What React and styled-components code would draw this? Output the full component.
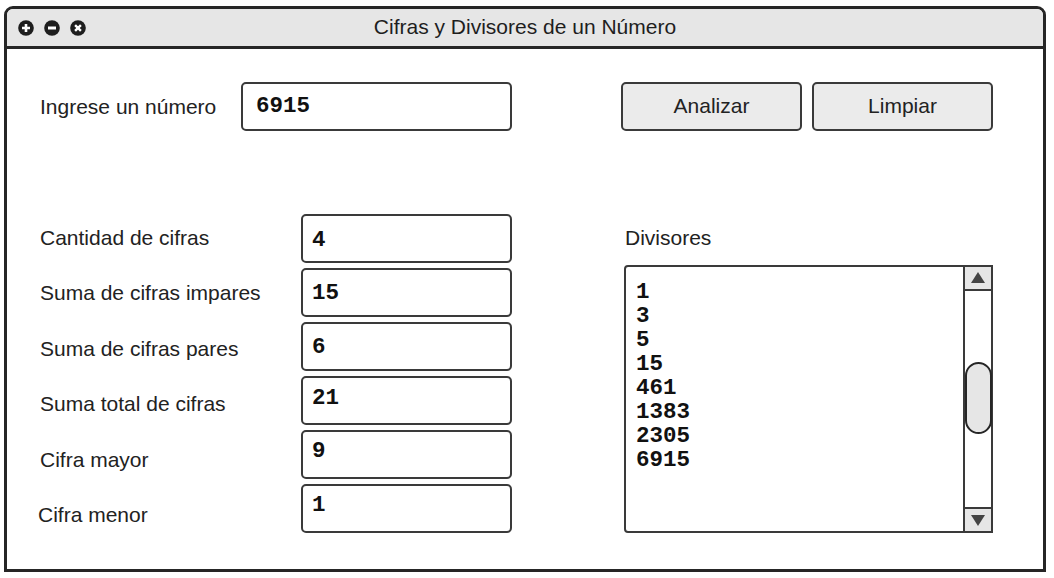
import React from "react";
import styled, { createGlobalStyle } from "styled-components";

const Global = createGlobalStyle`
  html, body { margin: 0; padding: 0; background: #ffffff; }
  body { font-family: "Liberation Sans", Arial, sans-serif; color: #222; }
  * { box-sizing: border-box; }
`;

const Window = styled.div`
  margin: 6px 0 0 4px;
  width: 1042px;
  height: 566px;
  border: 3px solid #262626;
  border-radius: 9px 9px 0 0;
  display: flex;
  flex-direction: column;
  background: #fff;
  overflow: hidden;
`;

const TitleBar = styled.div`
  height: 40px;
  flex: none;
  background: #e6e6e6;
  border-bottom: 3px solid #262626;
  display: grid;
  grid-template-columns: 1fr auto 1fr;
  align-items: center;
`;

const Controls = styled.div`
  display: flex;
  gap: 10px;
  padding-left: 11px;
  align-items: center;
`;

const Title = styled.div`
  font-size: 21px;
  color: #1e1e1e;
  padding-bottom: 1px;
`;

const Content = styled.div`
  flex: 1;
  padding: 33px 0 0 33px;
  display: flex;
  flex-direction: column;
`;

const TopRow = styled.div`
  display: flex;
  align-items: center;
  height: 49px;
`;

const Label = styled.div`
  font-size: 21px;
  color: #222;
  width: ${(p) => p.$w || "auto"};
  margin-left: ${(p) => p.$shift || 0}px;
  height: ${(p) => p.$h || "auto"};
  display: flex;
  align-items: center;
  white-space: nowrap;
`;

const Field = styled.div`
  width: ${(p) => p.$w}px;
  height: 49px;
  border: 2px solid #3a3a3a;
  border-radius: 5px;
  background: #fff;
  display: flex;
  align-items: center;
  padding-left: ${(p) => p.$pad || 9}px;
  padding-top: ${(p) => (p.$dy > 0 ? p.$dy : 0)}px;
  padding-bottom: ${(p) => (p.$dy < 0 ? -p.$dy : 0)}px;
  font-family: "Liberation Mono", "Courier New", monospace;
  font-weight: bold;
  font-size: 22.5px;
  color: #111;
`;

const Buttons = styled.div`
  display: flex;
  gap: 10px;
  margin-left: 109px;
`;

const Button = styled.button`
  width: 181px;
  height: 49px;
  border: 2px solid #3a3a3a;
  border-radius: 5px;
  background: #ebebeb;
  font-family: "Liberation Sans", Arial, sans-serif;
  font-size: 21px;
  color: #222;
  padding: 0 0 2px 0;
  cursor: pointer;
`;

const Lower = styled.div`
  margin-top: 83px;
  display: flex;
`;

const LabelColumn = styled.div`
  width: 261px;
  display: flex;
  flex-direction: column;
  gap: 7.4px;
`;

const FieldColumn = styled.div`
  display: flex;
  flex-direction: column;
  gap: 5px;
`;

const RightColumn = styled.div`
  margin-left: 112px;
  display: flex;
  flex-direction: column;
`;

const ListBox = styled.div`
  margin-top: 3px;
  width: 369px;
  height: 268px;
  border: 2px solid #3a3a3a;
  border-radius: 4px 0 0 4px;
  display: flex;
`;

const ListItems = styled.div`
  flex: 1;
  padding: 13px 0 0 10px;
  font-family: "Liberation Mono", "Courier New", monospace;
  font-weight: bold;
  font-size: 22.5px;
  line-height: 24px;
  color: #111;
`;

const Scrollbar = styled.div`
  width: 28px;
  border-left: 2px solid #3a3a3a;
  display: flex;
  flex-direction: column;
`;

const ArrowButton = styled.div`
  height: 24px;
  flex: none;
  background: #e6e6e6;
  display: flex;
  align-items: center;
  justify-content: center;
  border-bottom: ${(p) => (p.$top ? "2px solid #3a3a3a" : "none")};
  border-top: ${(p) => (p.$top ? "none" : "2px solid #3a3a3a")};
`;

const Track = styled.div`
  flex: 1;
  display: flex;
  flex-direction: column;
  align-items: center;
`;

const Thumb = styled.div`
  margin-top: 71px;
  width: 27px;
  margin-left: -1px;
  margin-right: -1px;
  height: 72px;
  border: 2px solid #262626;
  border-radius: 14px;
  background: #e6e6e6;
`;

const CircleIcon = ({ kind }) => (
  <svg width="16" height="16" viewBox="0 0 16 16">
    <circle cx="8" cy="8" r="7.8" fill="#1e1e1e" />
    {kind === "plus" && (
      <path d="M8 4v8M4 8h8" stroke="#fff" strokeWidth="2.6" />
    )}
    {kind === "minus" && <path d="M4 8h8" stroke="#fff" strokeWidth="2.8" />}
    {kind === "close" && (
      <path d="M5.1 5.1l5.8 5.8M10.9 5.1l-5.8 5.8" stroke="#fff" strokeWidth="2.4" />
    )}
  </svg>
);

const Triangle = ({ down }) => (
  <svg width="16" height="14" viewBox="0 0 16 14">
    <path d={down ? "M1 2h14L8 13z" : "M8 1l7 11H1z"} fill="#444" />
  </svg>
);

const rows = [
  { label: "Cantidad de cifras", value: "4", dy: 3 },
  { label: "Suma de cifras impares", value: "15", dy: 1 },
  { label: "Suma de cifras pares", value: "6", dy: 1 },
  { label: "Suma total de cifras", value: "21", dy: -5 },
  { label: "Cifra mayor", value: "9", dy: -7 },
  { label: "Cifra menor", value: "1", dy: -7, shift: -2 },
];

const divisors = ["1", "3", "5", "15", "461", "1383", "2305", "6915"];

export default function App() {
  return (
    <>
      <Global />
      <Window>
        <TitleBar>
          <Controls>
            <CircleIcon kind="plus" />
            <CircleIcon kind="minus" />
            <CircleIcon kind="close" />
          </Controls>
          <Title>Cifras y Divisores de un Número</Title>
          <div />
        </TitleBar>
        <Content>
          <TopRow>
            <Label $w="201px">Ingrese un número</Label>
            <Field $w={271} $pad={13} $dy={-1}>6915</Field>
            <Buttons>
              <Button>Analizar</Button>
              <Button>Limpiar</Button>
            </Buttons>
          </TopRow>
          <Lower>
            <LabelColumn>
              {rows.map((r) => (
                <Label key={r.label} $h="48px" $shift={r.shift}>
                  {r.label}
                </Label>
              ))}
            </LabelColumn>
            <FieldColumn>
              {rows.map((r) => (
                <Field key={r.label} $w={211} $dy={r.dy}>
                  {r.value}
                </Field>
              ))}
            </FieldColumn>
            <RightColumn>
              <Label $h="48px" $shift={1}>Divisores</Label>
              <ListBox>
                <ListItems>
                  {divisors.map((d) => (
                    <div key={d}>{d}</div>
                  ))}
                </ListItems>
                <Scrollbar>
                  <ArrowButton $top>
                    <Triangle />
                  </ArrowButton>
                  <Track>
                    <Thumb />
                  </Track>
                  <ArrowButton>
                    <Triangle down />
                  </ArrowButton>
                </Scrollbar>
              </ListBox>
            </RightColumn>
          </Lower>
        </Content>
      </Window>
    </>
  );
}
